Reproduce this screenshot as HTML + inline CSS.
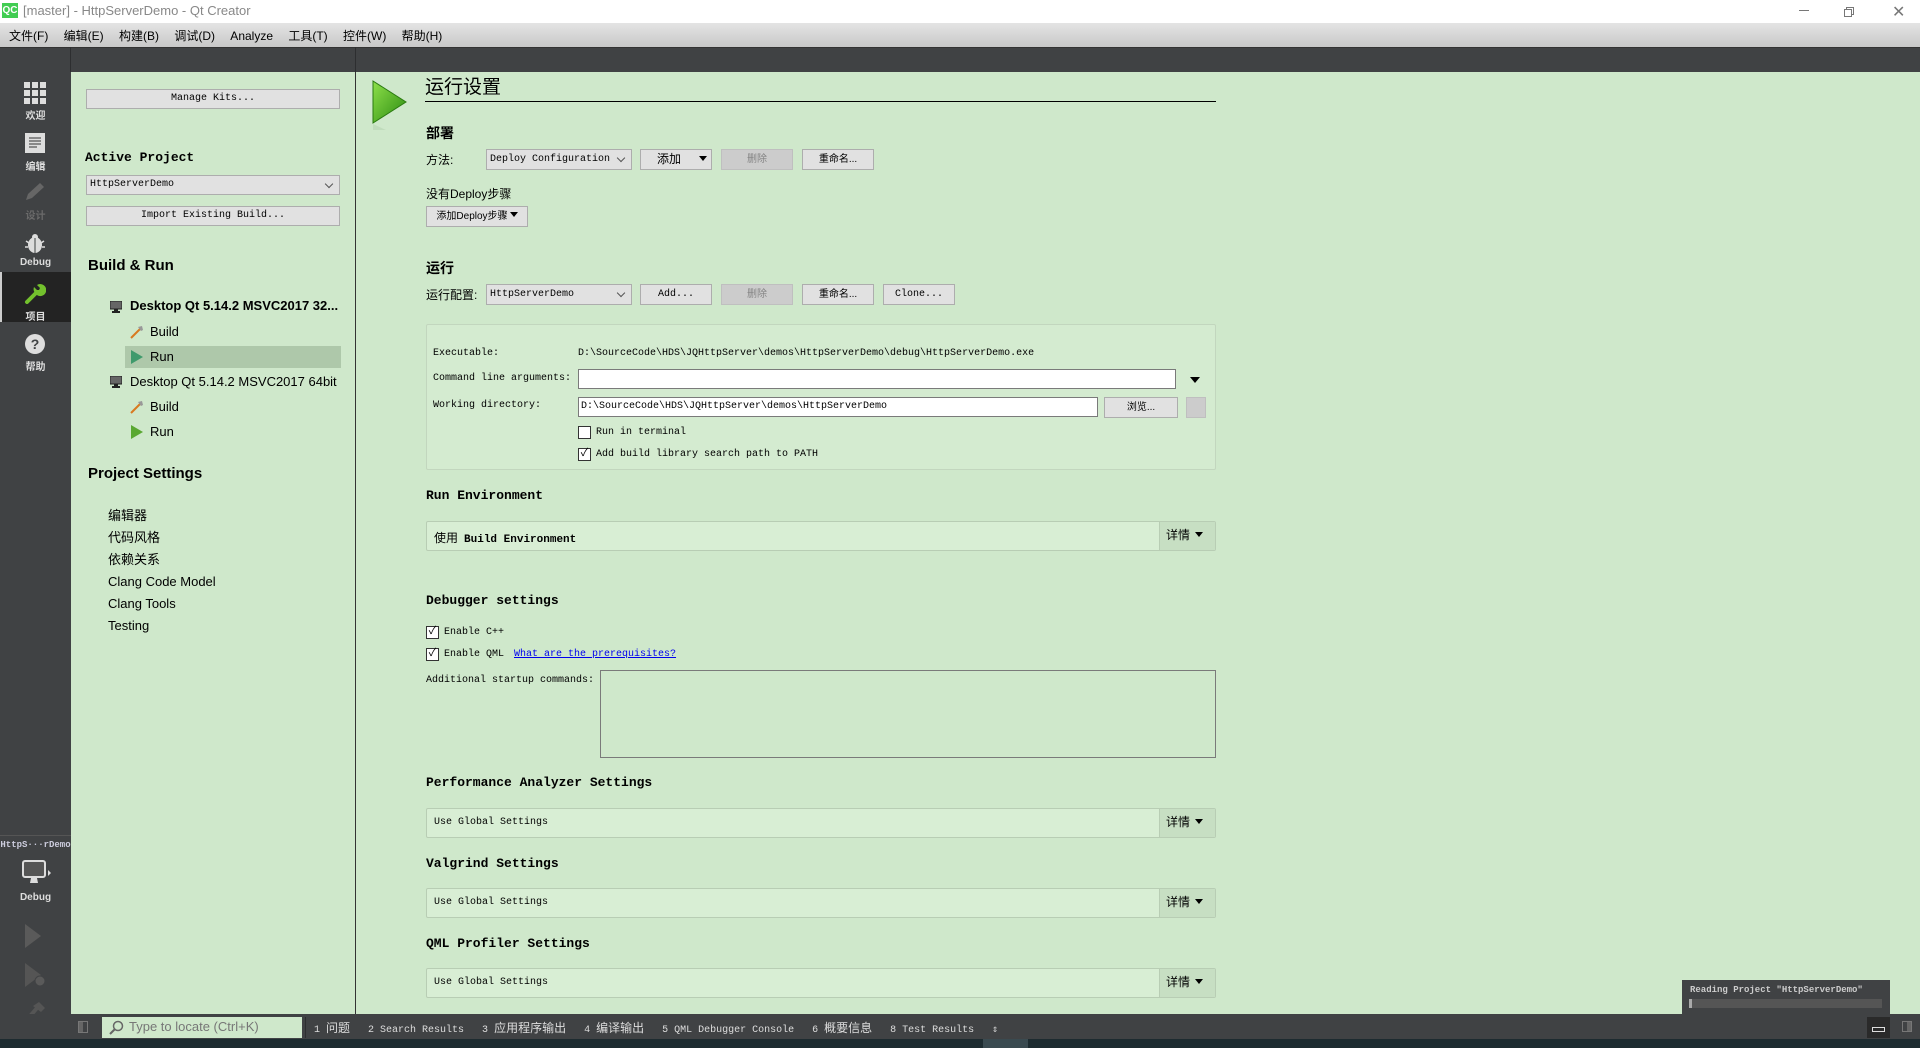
<!DOCTYPE html>
<html><head><meta charset="utf-8"><style>
*{margin:0;padding:0;box-sizing:border-box}
body{width:1920px;height:1048px;overflow:hidden;background:#cfe8cb;position:relative;font-family:"Liberation Mono","Noto Sans CJK SC",monospace;font-size:10px;color:#000}
.a{position:absolute;white-space:nowrap}
.s{font-family:"Liberation Sans","Noto Sans CJK SC",sans-serif}
.cj{font-family:"Liberation Sans","Noto Sans CJK SC",sans-serif;font-size:12px}
.btn{position:absolute;background:#e1e1e1;border:1px solid #adadad;text-align:center;font-size:10px;line-height:20px}
.dis{background:#cccccc;border-color:#bfbfbf;color:#838383}
.cb{position:absolute;background:#e1e1e1;border:1px solid #adadad;font-size:10px;line-height:20px;padding-left:3px}
.cb:after{content:"";position:absolute;right:7px;top:5px;width:5px;height:5px;border-right:1px solid #555;border-bottom:1px solid #555;transform:rotate(45deg)}
.h{font-weight:bold;font-size:13px}
.box{position:absolute;background:#d8eed4;border:1px solid #b8cdb4;border-radius:2px}
.det{position:absolute;right:0;top:0;bottom:0;width:56px;background:#c7dfc3;border-left:1px solid #b8cdb4;font-size:12px;line-height:26px;padding-left:6px;font-family:"Liberation Sans","Noto Sans CJK SC",sans-serif}
.tri{display:inline-block;width:0;height:0;border-left:4px solid transparent;border-right:4px solid transparent;border-top:5px solid #000;margin-left:5px;vertical-align:2px}
.chk{position:absolute;width:13px;height:13px;border:1px solid #333;background:#fff}
.sb{position:absolute;left:0;width:71px;text-align:center;color:#ddd;font-size:10px;font-weight:bold;font-family:"Liberation Sans","Noto Sans CJK SC",sans-serif}
.tree{position:absolute;font-family:"Liberation Sans",sans-serif;font-size:13px}
</style></head><body>
<div class="a" style="left:0;top:0;width:1920px;height:23px;background:#fff"></div>
<div class="a" style="left:2px;top:3px;width:16px;height:15px;background:#41cd52;color:#fff;font:bold 10px 'Liberation Sans';line-height:15px;text-align:center">QC</div>
<div class="a s" style="left:23px;top:3px;font-size:13px;color:#888">[master] - HttpServerDemo - Qt Creator</div>
<div class="a" style="left:1799px;top:10px;width:10px;height:1px;background:#777"></div>
<div class="a" style="left:1846px;top:7px;width:8px;height:8px;border:1px solid #777"></div>
<div class="a" style="left:1844px;top:9px;width:8px;height:8px;border:1px solid #777;background:#fff"></div>
<div class="a" style="left:1892px;top:2px;font:16px 'Liberation Sans';color:#777">✕</div>
<div class="a" style="left:0;top:23px;width:1920px;height:24px;background:linear-gradient(#e4e4e4,#c8c8c8)"></div>
<div class="a cj" style="left:9px;top:27px;font-size:12px;word-spacing:12px">文件(F) 编辑(E) 构建(B) 调试(D) Analyze 工具(T) 控件(W) 帮助(H)</div>
<div class="a" style="left:0;top:47px;width:1920px;height:25px;background:#404244;border-top:1px solid #333"></div>
<div class="a" style="left:70px;top:47px;width:1px;height:25px;background:#2d2e30"></div>
<div class="a" style="left:355px;top:47px;width:1px;height:25px;background:#2d2e30"></div>
<div class="a" style="left:0;top:72px;width:71px;height:942px;background:#404244"></div>
<svg class="a" style="left:24px;top:82px" width="22" height="22"><g fill="#ddd"><rect x="0" y="0" width="6" height="6"/><rect x="8" y="0" width="6" height="6"/><rect x="16" y="0" width="6" height="6"/><rect x="0" y="8" width="6" height="6"/><rect x="8" y="8" width="6" height="6"/><rect x="16" y="8" width="6" height="6"/><rect x="0" y="16" width="6" height="6"/><rect x="8" y="16" width="6" height="6"/><rect x="16" y="16" width="6" height="6"/></g></svg>
<div class="sb" style="top:107px">欢迎</div>
<svg class="a" style="left:25px;top:133px" width="20" height="20"><rect width="20" height="20" fill="#ddd"/><g stroke="#333"><line x1="4" y1="5" x2="16" y2="5"/><line x1="4" y1="8" x2="16" y2="8"/><line x1="4" y1="11" x2="16" y2="11"/><line x1="4" y1="14" x2="12" y2="14"/></g></svg>
<div class="sb" style="top:158px">编辑</div>
<svg class="a" style="left:24px;top:182px" width="22" height="20"><path d="M2 18 L4 12 L16 1 L20 5 L8 16 Z" fill="#666"/></svg>
<div class="sb" style="top:207px;color:#6a6a6a">设计</div>
<svg class="a" style="left:24px;top:232px" width="22" height="22"><ellipse cx="11" cy="13" rx="7" ry="8" fill="#ddd"/><circle cx="11" cy="5" r="3" fill="#ddd"/><g stroke="#ddd" stroke-width="1.5"><line x1="2" y1="9" x2="5" y2="11"/><line x1="20" y1="9" x2="17" y2="11"/><line x1="1" y1="15" x2="4" y2="15"/><line x1="21" y1="15" x2="18" y2="15"/></g><line x1="11" y1="6" x2="11" y2="21" stroke="#404244"/></svg>
<div class="sb" style="top:257px">Debug</div>
<div class="a" style="left:0;top:272px;width:71px;height:50px;background:#232323"></div>
<div class="a" style="left:0;top:272px;width:2px;height:50px;background:#ccc"></div>
<svg class="a" style="left:24px;top:282px" width="22" height="22"><path d="M3 20 L12 11" stroke="#73c12d" stroke-width="4" stroke-linecap="round"/><path d="M11 11 A6 6 0 1 0 13 3 L16 6 L15 8 L13 8 L10 5 A6 6 0 0 0 11 11Z" fill="#73c12d"/></svg>
<div class="sb" style="top:308px">项目</div>
<svg class="a" style="left:25px;top:334px" width="20" height="20"><circle cx="10" cy="10" r="10" fill="#ddd"/><text x="10" y="15" text-anchor="middle" font-family="Liberation Sans" font-weight="bold" font-size="14" fill="#404244">?</text></svg>
<div class="sb" style="top:358px">帮助</div>
<div class="a" style="left:0;top:835px;width:71px;height:1px;background:#555"></div>
<div class="sb" style="top:840px;font-size:9px;font-family:'Liberation Mono',monospace;color:#ccd">HttpS···rDemo</div>
<svg class="a" style="left:22px;top:860px" width="32" height="26"><rect x="1" y="1" width="22" height="16" rx="2" fill="#555" stroke="#ddd" stroke-width="2"/><path d="M9 18 L15 18 L16 23 L8 23Z" fill="#ddd"/><path d="M26 10 L29 13 L26 16Z" fill="#ddd"/></svg>
<div class="sb" style="top:892px">Debug</div>
<svg class="a" style="left:25px;top:924px" width="20" height="24"><path d="M0 0 L16 12 L0 24Z" fill="#5a5a5a"/></svg>
<svg class="a" style="left:25px;top:963px" width="22" height="24"><path d="M0 0 L16 12 L0 24Z" fill="#555"/><ellipse cx="15" cy="18" rx="5" ry="5" fill="#5a5a5a" stroke="#404244"/></svg>
<svg class="a" style="left:23px;top:1000px" width="24" height="24"><path d="M2 22 L14 8" stroke="#555" stroke-width="4"/><path d="M10 6 L16 2 L22 8 L18 12Z" fill="#555"/></svg>
<div class="a" style="left:355px;top:72px;width:1px;height:942px;background:#333"></div>
<div class="btn" style="left:86px;top:89px;width:254px;height:20px;line-height:18px">Manage Kits...</div>
<div class="a h" style="left:85px;top:150px">Active Project</div>
<div class="cb" style="left:86px;top:175px;width:254px;height:20px;line-height:18px">HttpServerDemo</div>
<div class="btn" style="left:86px;top:206px;width:254px;height:20px;line-height:18px">Import Existing Build...</div>
<div class="a s" style="left:88px;top:257px;font-size:15px;font-weight:bold">Build &amp; Run</div>
<div class="a" style="left:125px;top:346px;width:216px;height:22px;background:#aec8aa"></div>
<svg class="a" style="left:110px;top:301px" width="12" height="12"><rect x="0" y="0" width="12" height="8" fill="#666" stroke="#222"/><rect x="4" y="8" width="4" height="2" fill="#222"/><rect x="2" y="10" width="8" height="2" fill="#222"/></svg>
<div class="tree" style="left:130px;top:298px;font-weight:bold">Desktop Qt 5.14.2 MSVC2017 32...</div>
<svg class="a" style="left:130px;top:325px" width="14" height="14"><path d="M1 13 L10 4" stroke="#d87a20" stroke-width="2"/><path d="M8 2 L12 1 L13 5 L11 6Z" fill="#999"/></svg>
<div class="tree" style="left:150px;top:324px">Build</div>
<svg class="a" style="left:131px;top:350px" width="12" height="14"><path d="M0 0 L12 7 L0 14Z" fill="#3f9a6c"/></svg>
<div class="tree" style="left:150px;top:349px">Run</div>
<svg class="a" style="left:110px;top:376px" width="12" height="12"><rect x="0" y="0" width="12" height="8" fill="#666" stroke="#222"/><rect x="4" y="8" width="4" height="2" fill="#222"/><rect x="2" y="10" width="8" height="2" fill="#222"/></svg>
<div class="tree" style="left:130px;top:374px">Desktop Qt 5.14.2 MSVC2017 64bit</div>
<svg class="a" style="left:130px;top:400px" width="14" height="14"><path d="M1 13 L10 4" stroke="#d87a20" stroke-width="2"/><path d="M8 2 L12 1 L13 5 L11 6Z" fill="#999"/></svg>
<div class="tree" style="left:150px;top:399px">Build</div>
<svg class="a" style="left:131px;top:425px" width="12" height="14"><path d="M0 0 L12 7 L0 14Z" fill="#5aa832"/></svg>
<div class="tree" style="left:150px;top:424px">Run</div>
<div class="a s" style="left:88px;top:465px;font-size:15px;font-weight:bold">Project Settings</div>
<div class="a s" style="left:108px;top:505px;font-size:13px;line-height:22px">编辑器<br>代码风格<br>依赖关系<br>Clang Code Model<br>Clang Tools<br>Testing</div>
<svg class="a" style="left:372px;top:80px" width="36" height="50"><defs><linearGradient id="g" x1="0" y1="0" x2="1" y2="1"><stop offset="0" stop-color="#8ee04a"/><stop offset="1" stop-color="#2a8a10"/></linearGradient></defs><path d="M1 1 L34 22 L1 43Z" fill="url(#g)" stroke="#2a7a10"/><path d="M1 44 L14 50 L1 50Z" fill="#c0dcbc"/></svg>
<div class="a cj" style="left:425px;top:76px;font-size:19px;line-height:24px">运行设置</div>
<div class="a" style="left:425px;top:101px;width:791px;height:1px;background:#000"></div>
<div class="a cj" style="left:426px;top:123px;font-size:14px;font-weight:bold">部署</div>
<div class="a cj" style="left:426px;top:151px">方法:</div>
<div class="cb" style="left:486px;top:149px;width:146px;height:21px;line-height:19px">Deploy Configuration</div>
<div class="btn" style="left:640px;top:149px;width:72px;height:21px;line-height:19px;text-align:left;padding-left:16px"><span class="cj">添加</span><span class="tri" style="margin-left:18px"></span></div>
<div class="btn dis cj" style="left:721px;top:149px;width:72px;height:21px;line-height:19px">删除</div>
<div class="btn cj" style="left:802px;top:149px;width:72px;height:21px;line-height:19px">重命名...</div>
<div class="a cj" style="left:426px;top:185px">没有Deploy步骤</div>
<div class="btn cj" style="left:426px;top:206px;width:102px;height:21px;line-height:19px">添加Deploy步骤<span class="tri" style="margin-left:2px"></span></div>
<div class="a cj" style="left:426px;top:258px;font-size:14px;font-weight:bold">运行</div>
<div class="a cj" style="left:426px;top:286px">运行配置:</div>
<div class="cb" style="left:486px;top:284px;width:146px;height:21px;line-height:19px">HttpServerDemo</div>
<div class="btn" style="left:640px;top:284px;width:72px;height:21px;line-height:19px">Add...</div>
<div class="btn dis cj" style="left:721px;top:284px;width:72px;height:21px;line-height:19px">删除</div>
<div class="btn cj" style="left:802px;top:284px;width:72px;height:21px;line-height:19px">重命名...</div>
<div class="btn" style="left:883px;top:284px;width:72px;height:21px;line-height:19px">Clone...</div>
<div class="box" style="left:426px;top:324px;width:790px;height:146px;border-color:#c2d6be;background:#d4ebd0"></div>
<div class="a" style="left:433px;top:348px">Executable:</div>
<div class="a" style="left:578px;top:348px">D:\SourceCode\HDS\JQHttpServer\demos\HttpServerDemo\debug\HttpServerDemo.exe</div>
<div class="a" style="left:433px;top:373px">Command line arguments:</div>
<div class="a" style="left:578px;top:369px;width:598px;height:20px;background:#fff;border:1px solid #7a7a7a"></div>
<div class="a" style="left:1190px;top:377px;width:0;height:0;border-left:5px solid transparent;border-right:5px solid transparent;border-top:6px solid #000"></div>
<div class="a" style="left:433px;top:400px">Working directory:</div>
<div class="a" style="left:578px;top:397px;width:520px;height:20px;background:#fff;border:1px solid #7a7a7a;padding-left:2px;line-height:18px">D:\SourceCode\HDS\JQHttpServer\demos\HttpServerDemo</div>
<div class="btn cj" style="left:1104px;top:397px;width:74px;height:21px;line-height:19px">浏览...</div>
<div class="btn dis" style="left:1186px;top:397px;width:20px;height:21px"></div>
<div class="chk" style="left:578px;top:426px"></div>
<div class="a" style="left:596px;top:427px">Run in terminal</div>
<div class="chk" style="left:578px;top:448px;font-size:11px;line-height:11px;text-align:center">✓</div>
<div class="a" style="left:596px;top:449px">Add build library search path to PATH</div>
<div class="a h" style="left:426px;top:488px">Run Environment</div>
<div class="box" style="left:426px;top:521px;width:790px;height:30px"><div class="a" style="left:7px;top:7px"><span class="cj">使用</span> <b style="font-size:11px">Build Environment</b></div><div class="det">详情<span class="tri"></span></div></div>
<div class="a h" style="left:426px;top:593px">Debugger settings</div>
<div class="chk" style="left:426px;top:626px;font-size:11px;line-height:11px;text-align:center">✓</div>
<div class="a" style="left:444px;top:627px">Enable C++</div>
<div class="chk" style="left:426px;top:648px;font-size:11px;line-height:11px;text-align:center">✓</div>
<div class="a" style="left:444px;top:649px">Enable QML</div>
<div class="a" style="left:514px;top:649px;color:#00e;text-decoration:underline">What are the prerequisites?</div>
<div class="a" style="left:426px;top:675px">Additional startup commands:</div>
<div class="a" style="left:600px;top:670px;width:616px;height:88px;border:1px solid #7a7a7a"></div>
<div class="a h" style="left:426px;top:775px">Performance Analyzer Settings</div>
<div class="box" style="left:426px;top:808px;width:790px;height:30px"><div class="a" style="left:7px;top:8px">Use Global Settings</div><div class="det">详情<span class="tri"></span></div></div>
<div class="a h" style="left:426px;top:856px">Valgrind Settings</div>
<div class="box" style="left:426px;top:888px;width:790px;height:30px"><div class="a" style="left:7px;top:8px">Use Global Settings</div><div class="det">详情<span class="tri"></span></div></div>
<div class="a h" style="left:426px;top:936px">QML Profiler Settings</div>
<div class="box" style="left:426px;top:968px;width:790px;height:30px"><div class="a" style="left:7px;top:8px">Use Global Settings</div><div class="det">详情<span class="tri"></span></div></div>
<div class="a" style="left:1682px;top:980px;width:208px;height:34px;background:#404244"></div>
<div class="a" style="left:1690px;top:985px;color:#ccc;font-size:9px;font-weight:bold">Reading Project "HttpServerDemo"</div>
<div class="a" style="left:1689px;top:999px;width:193px;height:9px;background:#555"></div>
<div class="a" style="left:1689px;top:999px;width:3px;height:9px;background:#aaa"></div>
<div class="a" style="left:0;top:1014px;width:1920px;height:26px;background:#404244"></div>
<div class="a" style="left:78px;top:1021px;width:10px;height:12px;border:1px solid #777;background:linear-gradient(90deg,#666 50%,transparent 50%)"></div>
<div class="a" style="left:102px;top:1017px;width:200px;height:21px;background:#cfe8cb"></div>
<svg class="a" style="left:108px;top:1020px" width="16" height="16"><circle cx="10" cy="6" r="4.5" fill="none" stroke="#666" stroke-width="1.5"/><line x1="7" y1="9" x2="2" y2="14" stroke="#666" stroke-width="2"/></svg>
<div class="a s" style="left:129px;top:1019px;font-size:13px;color:#777">Type to locate (Ctrl+K)</div>
<div class="a" style="left:305px;top:1017px;width:1px;height:21px;background:#2d2e30"></div>
<div class="a" style="left:314px;top:1019px;color:#ddd;font-size:10px"><span>1 <span class="cj">问题</span></span>&nbsp;&nbsp;&nbsp;2 Search Results&nbsp;&nbsp;&nbsp;3 <span class="cj">应用程序输出</span>&nbsp;&nbsp;&nbsp;4 <span class="cj">编译输出</span>&nbsp;&nbsp;&nbsp;5 QML Debugger Console&nbsp;&nbsp;&nbsp;6 <span class="cj">概要信息</span>&nbsp;&nbsp;&nbsp;8 Test Results&nbsp;&nbsp;&nbsp;⇕</div>
<div class="a" style="left:1867px;top:1017px;width:23px;height:21px;background:#2a2a2a"></div>
<div class="a" style="left:1872px;top:1027px;width:13px;height:5px;border:1px solid #ddd"></div>
<div class="a" style="left:1902px;top:1021px;width:10px;height:11px;border:1px solid #777;background:linear-gradient(90deg,transparent 50%,#666 50%)"></div>
<div class="a" style="left:0;top:1039px;width:1920px;height:9px;background:#1d2b30"></div>
<div class="a" style="left:983px;top:1039px;width:45px;height:9px;background:#3a4a50"></div>
</body></html>
